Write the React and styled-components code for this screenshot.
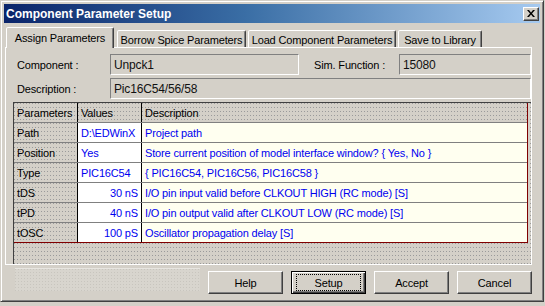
import React from "react";
import styled, { createGlobalStyle, css } from "styled-components";

const GlobalStyle = createGlobalStyle`
  body {
    margin: 0;
    background: #d4d0c8;
    font-family: "Liberation Sans", Arial, sans-serif;
    font-size: 11px;
    letter-spacing: -0.15px;
  }
`;

// stippled grey used by the grid control
const dots = css`
  background-color: #d4d0c8;
  background-image: conic-gradient(at 1px 1px, transparent 75%, #9a9a9a 0);
  background-size: 3px 4px;
`;

const Window = styled.div`
  width: 544px;
  height: 302px;
  box-sizing: border-box;
  background: #d4d0c8;
  border: 1px solid;
  border-color: #d4d0c8 #404040 #404040 #d4d0c8;
  box-shadow: inset 1px 1px #fff, inset -1px -1px #808080;
  padding: 3px;
  display: flex;
  flex-direction: column;
`;

const TitleBar = styled.div`
  height: 19px;
  flex-shrink: 0;
  display: flex;
  align-items: center;
  justify-content: space-between;
  padding: 0 1px 0 2px;
  background: linear-gradient(90deg, #0a246a 0%, #3a6ea5 45%, #a6caf0 100%);
  color: #fff;
  font-size: 12px;
  font-weight: bold;
  letter-spacing: 0;
`;

const CloseButton = styled.div`
  width: 16px;
  height: 14px;
  box-sizing: border-box;
  background: #d4d0c8;
  border: 1px solid;
  border-color: #fff #404040 #404040 #fff;
  box-shadow: inset -1px -1px #808080;
  display: flex;
  align-items: center;
  justify-content: center;
`;

const TabStrip = styled.div`
  display: flex;
  align-items: flex-end;
  gap: 2px;
  height: 20px;
  margin-top: 4px;
  padding-left: 2px;
  flex-shrink: 0;
`;

const Tab = styled.div`
  width: ${({ w }) => w}px;
  height: ${({ active }) => (active ? 21 : 17)}px;
  box-sizing: border-box;
  display: flex;
  align-items: center;
  justify-content: center;
  padding-top: ${({ active }) => (active ? 0 : 2)}px;
  background: #d4d0c8;
  border: 1px solid;
  border-bottom: none;
  border-color: #fff #404040 transparent #fff;
  border-radius: 2px 2px 0 0;
  box-shadow: inset -1px 0 #808080;
  white-space: nowrap;
  color: #000;
  ${({ active }) =>
    active &&
    css`
      position: relative;
      z-index: 1;
      margin-bottom: -1px;
      margin-right: 1px;
    `}
`;

const Panel = styled.div`
  height: 218px;
  box-sizing: border-box;
  margin: 0 8px 0 1px;
  border: 1px solid #fff;
  padding: 6px 0 0 7px;
  display: flex;
  flex-direction: column;
  gap: 3px;
  flex-shrink: 0;
`;

const FieldRow = styled.div`
  display: flex;
  align-items: center;
  height: 21px;
`;

const Label = styled.div`
  width: ${({ w }) => w}px;
  padding-left: ${({ pad }) => pad || 0}px;
  box-sizing: border-box;
  color: #000;
  flex-shrink: 0;
`;

const Field = styled.div`
  height: 21px;
  box-sizing: border-box;
  ${({ w }) => (w ? `width: ${w}px;` : "flex: 1;")}
  border: 1px solid;
  border-color: #808080 #fff #fff #808080;
  padding: 0 3px;
  display: flex;
  align-items: center;
  font-size: 12px;
  color: #111;
`;

const GridBox = styled.div`
  height: 162px;
  box-sizing: border-box;
  border-left: 1px solid #404040;
  border-top: 1px solid #404040;
  ${dots};
`;

const Table = styled.div`
  width: 513px;
  border-right: 1px solid #800000;
`;

const Row = styled.div`
  display: grid;
  grid-template-columns: 64px 64px 1fr;
  height: 20px;
  box-sizing: border-box;
  border-bottom: 1px solid ${({ last }) => (last ? "#800000" : "#808080")};
`;

const Cell = styled.div`
  display: flex;
  align-items: center;
  justify-content: ${({ right }) => (right ? "flex-end" : "flex-start")};
  padding: 0 3px;
  overflow: hidden;
  white-space: nowrap;
  color: ${({ kind }) => (kind === "head" || kind === "name" ? "#000" : "#0000f0")};
  border-right: ${({ line }) => (line ? "1px solid #000" : "none")};
  ${({ kind }) =>
    kind === "head" || kind === "name"
      ? dots
      : kind === "value"
      ? "background: #fff;"
      : "background: #fffff0;"}
`;

const Footer = styled.div`
  flex: 1;
  display: flex;
  align-items: flex-start;
  gap: 8px;
  padding: 6px 8px 0 11px;
`;

const StatusArea = styled.div`
  flex: 1;
  height: 22px;
  margin-top: -3px;
  border-top: 1px solid #e8e6e1;
  background-color: #d8d5ce;
  background-image: conic-gradient(at 1px 1px, transparent 75%, #c8c5be 0);
  background-size: 3px 3px;
`;

const Button = styled.div`
  width: 75px;
  height: 23px;
  box-sizing: border-box;
  display: flex;
  align-items: center;
  justify-content: center;
  background: #d4d0c8;
  color: #000;
  border: 1px solid;
  ${({ primary }) =>
    primary
      ? css`
          border-color: #000;
          box-shadow: inset 1px 1px #fff, inset -1px -1px #404040,
            inset -2px -2px #808080;
        `
      : css`
          border-color: #fff #404040 #404040 #fff;
          box-shadow: inset -1px -1px #808080;
        `}
`;

const FocusRect = styled.span`
  display: flex;
  align-items: center;
  justify-content: center;
  width: 63px;
  height: 15px;
  border: 1px dotted #000;
`;

const rows = [
  { name: "Path", value: "D:\\EDWinX", desc: "Project path" },
  {
    name: "Position",
    value: "Yes",
    desc: "Store current position of model interface window? { Yes, No }",
  },
  { name: "Type", value: "PIC16C54", desc: "{ PIC16C54, PIC16C56, PIC16C58 }" },
  {
    name: "tDS",
    value: "30 nS",
    desc: "I/O pin input valid before CLKOUT HIGH (RC mode) [S]",
    right: true,
  },
  {
    name: "tPD",
    value: "40 nS",
    desc: "I/O pin output valid after CLKOUT LOW (RC mode) [S]",
    right: true,
  },
  {
    name: "tOSC",
    value: "100 pS",
    desc: "Oscillator propagation delay [S]",
    right: true,
  },
];

const tabs = [
  { label: "Assign Parameters", w: 108 },
  { label: "Borrow Spice Parameters", w: 129 },
  { label: "Load Component Parameters", w: 148 },
  { label: "Save to Library", w: 84 },
];

const App = () => {
  return (
    <>
      <GlobalStyle />
      <Window>
        <TitleBar>
          <span>Component Parameter Setup</span>
          <CloseButton>
            <svg width="8" height="7" viewBox="0 0 8 7">
              <path
                d="M0 0h2l2 2.5L6 0h2L5 3.5 8 7H6L4 4.5 2 7H0l3-3.5z"
                fill="#000"
              />
            </svg>
          </CloseButton>
        </TitleBar>

        <TabStrip>
          {tabs.map((t, i) => (
            <Tab key={t.label} w={t.w} active={i === 0}>
              {t.label}
            </Tab>
          ))}
        </TabStrip>

        <Panel>
          <FieldRow>
            <Label w={97} pad={4}>
              Component :
            </Label>
            <Field w={189}>Unpck1</Field>
            <Label w={100} pad={15}>
              Sim. Function :
            </Label>
            <Field>15080</Field>
          </FieldRow>
          <FieldRow>
            <Label w={97} pad={4}>
              Description :
            </Label>
            <Field>Pic16C54/56/58</Field>
          </FieldRow>
          <GridBox>
            <Table>
              <Row>
                <Cell kind="head" line>
                  Parameters
                </Cell>
                <Cell kind="head" line>
                  Values
                </Cell>
                <Cell kind="head">Description</Cell>
              </Row>
              {rows.map((r, i) => (
                <Row key={r.name} last={i === rows.length - 1}>
                  <Cell kind="name" line>
                    {r.name}
                  </Cell>
                  <Cell kind="value" line right={r.right}>
                    {r.value}
                  </Cell>
                  <Cell kind="desc">{r.desc}</Cell>
                </Row>
              ))}
            </Table>
          </GridBox>
        </Panel>

        <Footer>
          <StatusArea />
          <Button>Help</Button>
          <Button primary>
            <FocusRect>Setup</FocusRect>
          </Button>
          <Button>Accept</Button>
          <Button>Cancel</Button>
        </Footer>
      </Window>
    </>
  );
};

export default App;
